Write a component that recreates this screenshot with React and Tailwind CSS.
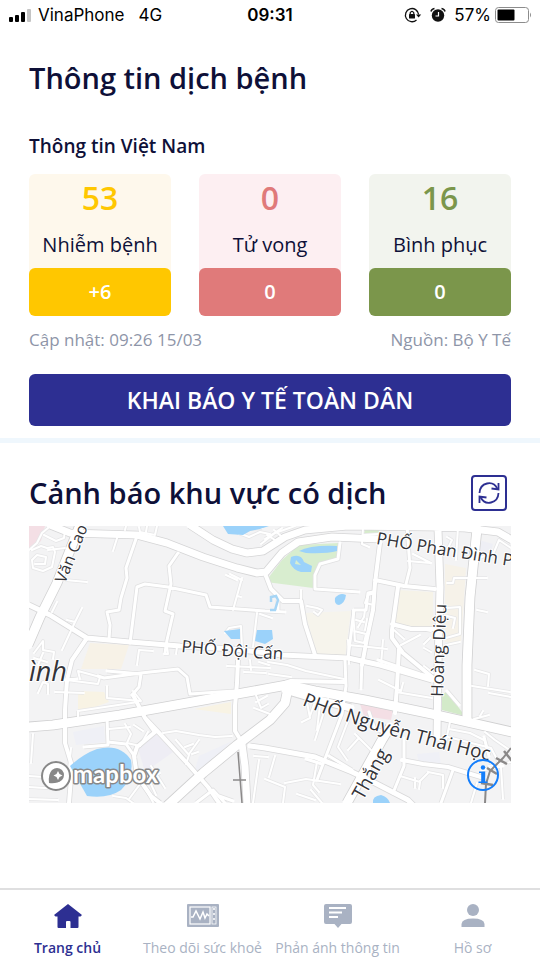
import React, { useState } from "react";

const stats = [
    { label: "Nhiễm bệnh", total: "53", today: "+6", card: "bg-[#fef8ec]", number: "text-[#ffc700]", bar: "bg-[#ffc700]" },
    { label: "Tử vong", total: "0", today: "0", card: "bg-[#fdeff2]", number: "text-[#e07a7a]", bar: "bg-[#e07a7a]" },
    { label: "Bình phục", total: "16", today: "0", card: "bg-[#f2f4ee]", number: "text-[#7b964b]", bar: "bg-[#7b964b]" },
];

// Roads grouped by drawn width, the narrow ones first
const roads = [
    {
        width: 2,
        casing: "#e6e6e7",
        paths: [
            "M3 24 L12 20 L18 22 L24 21 L26 26 L23 41 L14 45 L4 42 L3 34 L8 29 L17 31 L16 38 L6 38",
            "M0 24 L8 17 L13 7 L19 2 M15 9 L27 15 L35 12 L36 4 M19 24 L36 22",
            "M89 9 L84 25 M96 4 L97 0 M110 1 L111 6 L126 9 L128 0 M118 0 L117 6",
            "M36 54 L58 56 M53 82 L46 96 L38 94 M46 96 L33 124",
            "M28 76 L23 86 M5 127 L14 115 L14 124 L25 126 L24 133 M5 132 L18 136 M14 127 L9 139",
            "M201 48 L213 54 M213 52 L204 84 M208 70 L212 71 M208 54 L197 49",
            "M196 107 L200 102 L212 100 L213 121 M228 87 L224 121 M231 88 L243 92",
            "M108 139 L110 124 L124 125 M138 120 L139 128 L135 128 M148 121 L147 128",
            "M232 18 L246 7 L266 0 M236 13 L253 2 M238 9 L246 14 M245 4 L252 10",
            "M198 0 L207 6 L220 11 L231 6 L241 8 M210 8 L221 3 L233 2",
            "M334 2 L333 18 L340 21 M334 9 L349 8",
            "M384 28 L402 37 M379 35 L401 37 M418 11 L423 14 L419 22 M429 1 L427 34",
            "M418 57 L424 57 L425 52 L458 52 M448 84 L458 86 M453 31 L465 26 L470 14 L482 22",
            "M324 84 L326 115 L335 117 L337 108 L325 105 M339 69 L346 67 L345 79 L336 77 L339 69",
            "M330 84 L336 84 L335 91 L329 101 M327 94 L335 96 M319 114 L320 138",
            "M336 104 L338 93 M354 114 L352 139 M340 121 L358 123 M319 119 L340 121",
            "M278 80 L288 82 L293 84 L289 89 L285 86 M272 64 L272 75",
            "M365 100 L392 103 L402 105 M372 119 L391 109 M375 113 L365 104",
            "M418 82 L431 81 L431 108 L417 112 M418 90 L426 92 L424 102",
            "M395 118 L401 112 M395 122 L402 126 M431 116 L417 119",
            "M9 167 L14 156 L19 158 L19 168 M26 166 L55 167 M37 154 L69 158 L71 151 L49 145 L51 153",
            "M78 160 L78 172 L112 175 L104 165 M49 185 L109 176 M49 185 L49 191",
            "M96 198 L102 208 L98 217 L111 220 L119 206 M80 203 L101 201 M105 199 L114 205",
            "M134 207 L147 205 L170 209 L186 211 L203 210",
            "M147 214 L160 229 L157 238 M160 228 L170 214 M156 221 L164 218 M163 228 L169 226",
            "M122 240 L136 262 M116 245 L127 269 M112 255 L124 276 M121 254 L131 247",
            "M42 222 L40 243 M4 208 L2 237 M0 250 L29 252 M0 273 L29 274 M0 261 L31 263",
            "M100 273 L120 246 M84 270 L97 272 L104 277",
            "M215 146 L237 147 M198 140 L241 142 M221 134 L222 144 M230 136 L240 139",
            "M225 164 L232 182 L239 178 M227 176 L238 170 M225 182 L241 188",
            "M239 136 L258 139 L277 145 L315 153 M240 148 L262 151",
            "M276 166 L281 192 L273 196 M281 190 L288 170 M292 170 L288 204 M299 173 L286 214",
            "M320 192 L309 221 L318 234 M326 208 L343 225 M329 213 L319 224",
            "M350 154 L372 165 L374 157 M367 166 L403 172 M395 140 L404 147",
            "M443 160 L481 166 M446 144 L460 148 L459 160 M460 167 L482 171",
            "M420 203 L441 207 L455 214 M445 193 L460 189 M451 190 L454 185",
            "M371 250 L391 256 L390 263 M391 255 L399 247 M386 252 L386 262",
            "M415 210 L462 222 L470 237 M421 196 L415 224 M456 206 L466 214 L482 225",
            "M236 253 L256 261 L254 277 M256 257 L277 253 L311 258 M268 268 L286 274 M282 264 L293 277",
            "M288 236 L284 259 L290 266 M246 230 L240 251 M225 230 L239 231 M230 234 L224 277",
            "M399 246 L414 249 L414 262 M448 257 L442 277 M472 241 L474 273 M482 236 L460 240",
        ],
    },
    {
        width: 3,
        casing: "#e0e0e1",
        paths: [
            "M108 10 L97 42 L98 52 L92 72 L90 84 L78 86 L81 99 L80 113",
            "M101 117 L108 61 L116 58 L139 61 L177 69 L181 81 L236 85 L256 86",
            "M149 27 L140 40 L142 58 L136 85 L144 88 L138 114 L136 127",
            "M69 150 L75 152 L112 147 L149 143 L158 151 L161 168 L205 165",
            "M78 145 L112 148 L110 161 L103 169 M36 154 L48 153",
            "M78 191 L79 219 L55 221 M79 216 L97 218 L106 231",
            "M311 17 L309 33 L291 38 L286 49 L286 63 L330 66",
            "M325 84 L337 84 L339 67 L344 66 M325 84 L319 132",
            "M378 0 L381 42 L377 58 M316 134 L317 160 L313 188 L294 238 L288 254",
            "M333 134 L332 163 M349 134 L391 148 L403 151",
            "M375 212 L375 240 L364 267 M453 244 L474 240 M455 211 L460 230",
            "M424 244 L412 277 M277 233 L293 238 M340 186 L346 203 L361 208",
            "M167 277 L184 264 L196 277 M190 270 L204 275 M418 165 L430 179",
            "M249 74 L249 85 M300 230 L323 244",
        ],
    },
    {
        width: 4,
        casing: "#dcdcdd",
        paths: [
            "M58 112 L43 134 L38 154 L36 184 L36 217 L43 240 L40 277",
            "M104 169 L116 192 L134 211 L158 237 L179 261 L190 277",
            "M116 192 L126 206 L108 221 L105 230 L108 250 L122 270 L131 277",
            "M209 134 L208 157 L206 180 L206 205 L214 218",
            "M237 50 L242 63 L254 75 L272 75 L276 98 L286 129",
            "M351 17 L346 57 L344 84 L338 112 L333 139",
            "M346 54 L375 60 L406 63 M369 61 L363 104 L363 112 L374 127 L403 151",
            "M363 98 L382 103 L406 103 M370 123 L368 160 L366 187",
            "M239 163 L262 155 L316 156 M373 234 L394 238 L419 241 L455 252",
        ],
    },
    {
        width: 5,
        casing: "#d8d8d9",
        paths: [
            "M0 79 L21 89 L58 112 L101 116 L151 120 L204 123 L253 129 L319 132 L351 139 L403 154",
            "M221 220 L236 222 L286 231 L323 246 L346 257 L379 274 L386 281",
        ],
    },
    {
        width: 7,
        casing: "#d5d5d6",
        paths: [
            "M161 -1 L184 14 L203 23 L218 27 L234 25 L245 18 L256 11 L276 4 L319 0 L403 1 L436 2 L469 6 L483 14",
            "M21 -1 L41 7 L74 8 L108 9 L138 17 L174 31 L208 42 L228 47 L237 46 L253 27 L269 16 L303 11 L350 13",
            "M213 218 L216 240 L218 278",
            "M256 164 L290 174 L322 182",
            "M409 3 L411 61 L409 139 L408 211",
        ],
    },
    {
        width: 9,
        casing: "#d0d0d1",
        paths: [
            "M51 -1 L28 57 L11 91 L-1 119",
            "M138 280 L174 247 L208 219 L241 194 L256 177 L258 167",
            "M448 3 L441 71 L438 139 L438 194",
            "M361 201 L353 214 L318 277",
            "M-1 201 L24 199 L91 189 L158 177 L236 163 L258 159 L286 165 L336 174 L403 188 L483 206",
        ],
    },
];

const AreaMap = () => (
    <svg viewBox="0 0 482 277" className="block w-full" role="img" aria-label="Bản đồ khu vực" fontFamily="'Open Sans', 'Noto Sans', sans-serif">
        <rect width="482" height="277" fill="#f3f3f4" />

        {/* Land use */}
        <path d="M0 0 H16 L12 15 L0 24 Z" fill="#f4dfe5" />
        <path d="M337 0 H351 L349 13 L334 10 Z" fill="#d7eccc" />
        <path d="M237 55 L253 34 L270 19 L310 17 L308 33 L290 39 L284 62 L237 56 Z" fill="#d8edcf" />
        <path d="M369 64 L404 66 V104 L366 98 Z" fill="#f6f3e8" />
        <path d="M416 38 L437 42 L432 117 L416 116 Z" fill="#f6f2e9" />
        <path d="M276 87 L322 85 L316 132 L288 128 Z" fill="#f6f4ec" />
        <path d="M61 117 L100 119 L92 143 L52 143 Z" fill="#f7f2e7" />
        <path d="M49 165 L75 166 L80 176 L49 187 Z" fill="#f8f3e4" />
        <path d="M165 183 L202 176 V188 Z" fill="#f8f3e4" />
        <path d="M44 206 L75 200 L76 216 L47 219 Z" fill="#eff0f6" />
        <path d="M109 222 L127 208 L144 226 L116 246 Z" fill="#eeedf4" />
        <path d="M170 230 L203 215 L190 228 L165 247 Z" fill="#eff0f6" />
        <path d="M331 178 L364 184 L362 194 L335 190 Z" fill="#f4dfe5" />
        <path d="M413 168 L418 166 L436 190 L413 184 Z" fill="#d3eac9" />
        <path d="M450 14 L464 18 L460 34 L450 32 Z" fill="#eeeff5" />
        <path d="M388 228 L410 226 L412 240 L390 238 Z" fill="#eff0f6" />

        {/* Road casings go under every road surface so that crossings stay open */}
        <g fill="none" strokeLinejoin="round">
            {roads.map((group) => (
                <path key={group.width} d={group.paths.join(" ")} stroke={group.casing} strokeWidth={group.width + 1.6} />
            ))}
        </g>
        <g fill="none" stroke="#ffffff" strokeLinejoin="round" strokeLinecap="round">
            {roads.map((group) => (
                <path key={group.width} d={group.paths.join(" ")} strokeWidth={group.width} />
            ))}
        </g>

        {/* Water */}
        <g fill="#9bd2fa">
            <path d="M194 0 H240 L231 3 L221 5 L214 9 L199 8 Z" />
            <path d="M270 25 Q281 19 308 20 L308 25 Q297 28 277 27 Z" />
            <path fillRule="evenodd" d="M262 31 Q272 27 275 36 L283 40 L282 46 L272 46 Q264 44 261 37 Z M267 34 L272 39 L266 38 Z" />
            <path d="M306 72 Q311 66 317 69 Q316 77 310 79 Q305 79 306 72 Z" />
            <path d="M195 105 L211 103 V113 L202 113 Z" />
            <path d="M228 104 L243 104 L244 113 L236 118 L226 115 Z" />
            <path d="M41 240 Q54 228 68 223 Q91 217 102 234 Q105 251 92 264 Q79 273 58 270 Z" />
            <path d="M344 277 Q343 270 352 269 Q359 271 361 277 Z" />
        </g>
        <path d="M241 84 L246 84 L249 74 L247 70 L242 71 V76" fill="none" stroke="#a6d5f5" strokeWidth="2.5" />

        {/* Railway */}
        <g fill="none" stroke="#8b8989">
            <path d="M209 226 L213 277 M204 254 L217 254" strokeWidth="1.5" />
            <path d="M482 222 L474 232 L461 245 L457 258 L456 277" strokeWidth="2" />
            <path d="M475 225 L483 235 M467 232 L478 238 M458 242 L468 248 M452 257 L464 259" strokeWidth="2.5" />
        </g>

        {/* Labels */}
        <defs>
            <path id="doi-can" d="M152 126 Q200 131 260 134" />
            <path id="phan-dinh" d="M347 18 Q404 28 500 43" />
            <path id="nguyen-thai-hoc" d="M273 179 Q352 211 480 239" />
        </defs>
        <g fill="#333338" stroke="#ffffff" strokeWidth="2" strokeLinejoin="round" paintOrder="stroke" fontSize="17">
            <text transform="translate(36 58) rotate(-68)" fontSize="16">Văn Cao</text>
            <text><textPath href="#phan-dinh">PHỐ Phan Đình P</textPath></text>
            <text><textPath href="#doi-can">PHỐ Đội Cấn</textPath></text>
            <text fontSize="19"><textPath href="#nguyen-thai-hoc">PHỐ Nguyễn Thái Học</textPath></text>
            <text transform="translate(414 171) rotate(-88)">Hoàng Diệu</text>
            <text transform="translate(334 275) rotate(-61)" fontSize="19">Thắng</text>
            <text x="0" y="155" fontSize="27" fontStyle="italic">ình</text>
        </g>

        {/* Mapbox mark */}
        <g>
            <circle cx="27" cy="250" r="14" fill="#ffffff" stroke="#888888" strokeWidth="2" />
            <path d="M20 257 Q19 248 23 244 Q28 240 33 244 Q37 249 33 254 Q28 258 20 257 Z" fill="#888888" />
            <path d="M29 245 L30.500 248 L33.500 249.500 L30.500 251 L29 254 L27.500 251 L24.500 249.500 L27.500 248 Z" fill="#ffffff" />
            <text x="44" y="257" fontSize="24" fontFamily="Lato, sans-serif" fontWeight="700" fill="#ffffff" stroke="#888888" strokeWidth="3" strokeLinejoin="round" paintOrder="stroke">mapbox</text>
        </g>
    </svg>
);

const InfoIcon = () => (
    <svg className="w-8 h-8" viewBox="0 0 32 32" fill="none">
        <circle cx="16" cy="16" r="15" stroke="#147efb" strokeWidth="2" />
        <circle cx="16" cy="8.500" r="2.200" fill="#147efb" />
        <path d="M12 12.500 H18.200 V22.500 H20.500 V24 H11.500 V22.500 H14.200 V14 H12 Z" fill="#147efb" />
    </svg>
);

const RefreshIcon = () => (
    <svg className="w-6 h-6 shrink-0" viewBox="0 0 24 24" fill="none" stroke="currentColor" strokeWidth="1.8">
        <path d="M2.500 12 C3 1.500 16 -1.500 20.500 8" />
        <path d="M21.500 2 V8.500 L14.500 7.500" />
        <path d="M21.500 12 C21 22.500 8 25.500 3.500 16" />
        <path d="M2.500 22 V15.500 L9.500 16.500" />
    </svg>
);

const HomeIcon = () => (
    <svg className="w-8 h-7" viewBox="0 0 32 28" fill="currentColor">
        <path d="M16 2 L30 13 L28.500 14.500 H26.500 V25 Q26.500 26 25.500 26 H18.500 V20 Q18.500 19 17.500 19 H15 Q14 19 14 20 V26 H6.500 Q5.500 26 5.500 25 V14.500 H3.500 L2 13 Z" />
    </svg>
);

const HealthIcon = () => (
    <svg className="w-8 h-7" viewBox="0 0 32 28" fill="none">
        <rect y="2" width="32" height="23" rx="1" fill="currentColor" />
        <rect x="3" y="5" width="20" height="17" stroke="#ffffff" strokeWidth="1.2" />
        <path d="M4 15 H6 L9 9 L13 17 L16 10 L18 16 L20 12 L22 14" stroke="#ffffff" strokeWidth="1.5" />
        <rect x="25" y="5" width="4" height="17" stroke="#ffffff" strokeWidth="0.8" />
        <path d="M27 6 V21" stroke="#ffffff" strokeWidth="1.5" strokeDasharray="2 3" />
    </svg>
);

const FeedbackIcon = () => (
    <svg className="w-8 h-7" viewBox="0 0 32 28" fill="none">
        <path d="M4 2 H28 Q30 2 30 4 V20 Q30 22 28 22 H19.500 L16 26 L12.500 22 H4 Q2 22 2 20 V4 Q2 2 4 2 Z" fill="currentColor" />
        <path d="M7 6 H24 M7 10.500 H20 M7 15 H16" stroke="#ffffff" strokeWidth="1.8" />
    </svg>
);

const ProfileIcon = () => (
    <svg className="w-8 h-7" viewBox="0 0 32 28" fill="currentColor">
        <circle cx="16" cy="8" r="6" />
        <path d="M4.500 25 V22 Q5 16.500 16 16.500 Q27 16.500 27.500 22 V25 Z" />
    </svg>
);

const tabs = [
    { id: "home", label: "Trang chủ", Icon: HomeIcon },
    { id: "health", label: "Theo dõi sức khoẻ", Icon: HealthIcon },
    { id: "feedback", label: "Phản ánh thông tin", Icon: FeedbackIcon },
    { id: "profile", label: "Hồ sơ", Icon: ProfileIcon },
];

const StatusBar = () => (
    <div className="grid grid-cols-3 items-center h-[30px] px-2 text-black font-['Inter',sans-serif] text-[17px] leading-5">
        <div className="flex items-center gap-1.5 whitespace-nowrap">
            <svg className="w-6 h-[15px] shrink-0" viewBox="0 0 24 15">
                <rect x="1" y="9" width="4" height="5" rx="1" />
                <rect x="7" y="7" width="4" height="7" rx="1" />
                <rect x="13" y="4" width="4" height="10" rx="1" />
                <rect x="19" y="1" width="4" height="13" rx="1" fill="#c4c4c4" />
            </svg>
            <span>VinaPhone</span>
            <span className="ml-2">4G</span>
        </div>
        <div className="text-center font-semibold">09:31</div>
        <div className="flex items-center justify-end gap-1 whitespace-nowrap">
            <svg className="w-[18px] h-4" viewBox="0 0 18 16" fill="none" stroke="#111111">
                <path d="M12.500 13 A6.600 6.600 0 1 1 14.600 7.500" strokeWidth="1.3" />
                <path d="M12 7.500 H17.200 L14.600 10.500 Z" fill="#111111" stroke="none" />
                <rect x="5" y="7" width="6" height="4.500" rx="0.500" fill="#111111" stroke="none" />
                <path d="M6.200 7 V5.800 Q8 3 9.800 5.800 V7" strokeWidth="1.200" />
            </svg>
            <svg className="w-4 h-4 mx-1" viewBox="0 0 16 16">
                <circle cx="8" cy="8.500" r="6.200" fill="#111111" />
                <path d="M1 4.500 Q1.500 2 4.500 1.500 M15 4.500 Q14.500 2 11.500 1.500" fill="none" stroke="#111111" strokeWidth="1.500" />
                <path d="M8.500 5 V9 H5.500" fill="none" stroke="#ffffff" strokeWidth="1.200" />
            </svg>
            <span>57%</span>
            <svg className="w-[37px] h-4" viewBox="0 0 37 16">
                <rect x="0.500" y="0.500" width="33" height="15" rx="3" fill="none" stroke="#8c8c8c" />
                <rect x="2.500" y="2.500" width="17" height="11" rx="1" fill="#000000" />
                <path d="M35 5.500 Q37 8 35 10.500 Z" fill="#8c8c8c" />
            </svg>
        </div>
    </div>
);

const App = () => {
    const [activeTab, setActiveTab] = useState("home");

    return (
        <div className="min-h-screen flex flex-col bg-white text-[#0e1038] font-['Open_Sans','Noto_Sans',sans-serif]">
            <StatusBar />

            <main className="flex-1">
                {/* National numbers */}
                <section className="px-[29px] pt-7 pb-3">
                    <h1 className="text-[29px] leading-10 font-semibold">Thông tin dịch bệnh</h1>
                    <h2 className="mt-9 text-[19px] leading-6 font-semibold">Thông tin Việt Nam</h2>

                    <div className="mt-4 grid grid-cols-3 gap-7 text-center">
                        {stats.map((stat) => (
                            <div key={stat.label} className={`rounded-md ${stat.card}`}>
                                <p className={`pt-1 text-[32px] leading-10 font-semibold ${stat.number}`}>{stat.total}</p>
                                <p className="mt-3 mb-2 text-xl leading-[30px] whitespace-nowrap">{stat.label}</p>
                                <p className={`rounded-md text-xl leading-[48px] font-semibold text-white ${stat.bar}`}>{stat.today}</p>
                            </div>
                        ))}
                    </div>

                    <div className="mt-3 flex justify-between text-[17px] leading-6 text-[#8e95a8]">
                        <p>Cập nhật: 09:26 15/03</p>
                        <p>Nguồn: Bộ Y Tế</p>
                    </div>

                    <button type="button" className="mt-[22px] block w-full h-[52px] rounded-md bg-[#2d2f92] text-white text-[23px] leading-8 font-semibold">
                        KHAI BÁO Y TẾ TOÀN DÂN
                    </button>
                </section>

                <div className="h-[5px] bg-[#eff7fd]"></div>

                {/* Area warning */}
                <section className="px-[29px] pt-8">
                    <div className="flex items-center justify-between">
                        <h2 className="text-[29px] leading-9 font-semibold">Cảnh báo khu vực có dịch</h2>
                        <button type="button" aria-label="Tải lại" className="mr-1 w-9 h-9 rounded-[4px] border-2 border-[#2d2f92] text-[#2d2f92] flex items-center justify-center">
                            <RefreshIcon />
                        </button>
                    </div>
                    <div className="mt-[15px] relative">
                        <AreaMap />
                        <button type="button" aria-label="Thông tin bản đồ" className="absolute right-3 bottom-3">
                            <InfoIcon />
                        </button>
                    </div>
                </section>
            </main>

            <nav className="grid grid-cols-4 h-[72px] border-t-2 border-[#dfdfe0] pt-3">
                {tabs.map(({ id, label, Icon }) => (
                    <button
                        key={id}
                        type="button"
                        onClick={() => setActiveTab(id)}
                        className={`flex flex-col items-center gap-2 text-sm leading-5 whitespace-nowrap ${
                            activeTab === id ? "font-semibold text-[#2d2f92]" : "font-normal text-[#a9b2c3]"
                        }`}
                    >
                        <Icon />
                        {label}
                    </button>
                ))}
            </nav>
        </div>
    );
};

export default App;
